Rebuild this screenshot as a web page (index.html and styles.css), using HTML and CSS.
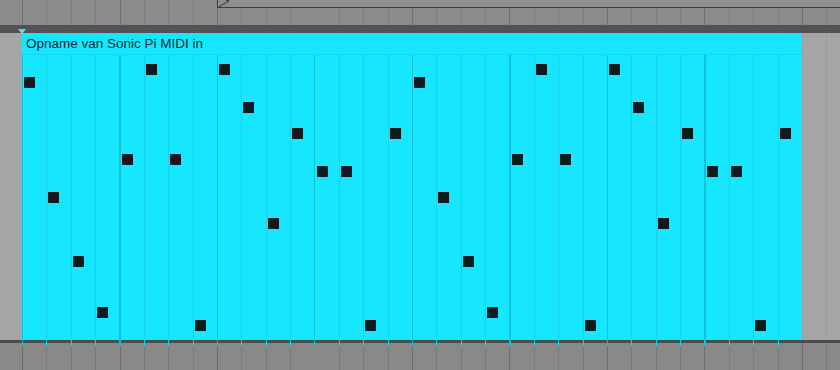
FILE: index.html
```html
<!DOCTYPE html>
<html lang="nl">
<head>
  <meta charset="UTF-8" />
  <meta name="viewport" content="width=device-width, initial-scale=1.0" />
  <title>Opname van Sonic Pi MIDI in</title>
  <link rel="stylesheet" href="styles.css">
</head>
<body>
  <div class="ruler">
    <div class="loop">
      <svg class="loop-mark" width="14" height="8" viewBox="0 0 14 8">
        <polyline points="0.5,7 11,1 8,0" fill="none" stroke="#333" stroke-width="1" />
      </svg>
    </div>
  </div>
  <div class="bar">
    <span class="start-mark"></span>
  </div>

  <div class="track">
    <div class="clip">
      <div class="clip-title">Opname van Sonic Pi MIDI in</div>
      <div class="notes" id="notes"></div>
    </div>
  </div>

  <div class="bottom-line"></div>
  <div class="bottom"></div>

  <script>
    // toonhoogte-rij per 16e noot (patroon herhaalt na 16 stappen)
    const pattern = [1, 10, 15, 19, 7, 0, 7, 20, 0, 3, 12, 5, 8, 8, 20, 5];
    const notes = document.getElementById('notes');

    for (let i = 0; i < 32; i++) {
      const note = document.createElement('div');
      note.className = 'note';
      note.style.gridColumn = (i + 1);
      note.style.gridRow = (pattern[i % 16] + 1);
      notes.appendChild(note);
    }
  </script>
</body>
</html>
```

FILE: styles.css
```css
body {
  margin: 0;
  padding: 0;
  width: 840px;
  height: 370px;
  overflow: hidden;
  background-color: #8a8a8a;
  font-family: 'Liberation Sans', Arial, sans-serif;
}
.ruler {
  height: 25px;
  background-color: #8b8b8b;
  background-image:
    repeating-linear-gradient(90deg, transparent 0 22px, #727272 22px 23px, transparent 23px 97.5px),
    repeating-linear-gradient(90deg, transparent 0 22px, #7d7d7d 22px 23px, transparent 23px 24.375px);
}
.loop {
  position: relative;
  height: 7px;
  margin-left: 217px;
  background-color: #8e8e8e;
  border-left: 1px solid #3c3c3c;
  border-bottom: 1px solid #3c3c3c;
}
.loop-mark {
  position: absolute;
  left: 0;
  top: 0;
}
.bar {
  position: relative;
  height: 8px;
  background-color: #525252;
}
.start-mark {
  position: absolute;
  left: 18px;
  top: 4px;
  width: 0;
  height: 0;
  border-left: 4px solid transparent;
  border-right: 4px solid transparent;
  border-top: 5px solid #6fd3ee;
}
.track {
  display: flex;
  height: 307px;
  padding-left: 22px;
  background-color: #a5a5a5;
  background-image:
    repeating-linear-gradient(90deg, transparent 0 22px, #9c9c9c 22px 23px, transparent 23px 24.375px);
}
.clip {
  display: flex;
  flex-direction: column;
  width: 780px;
  background-color: #17e6ff;
}
.clip-title {
  height: 21px;
  line-height: 22px;
  padding-left: 4px;
  font-size: 13.5px;
  color: #0c2c34;
  border-bottom: 1px solid #14d6ec;
  white-space: nowrap;
}
.notes {
  flex: 1;
  display: grid;
  grid-template-columns: repeat(32, 1fr);
  grid-template-rows: repeat(22, 12.8px);
  padding-top: 9px;
  box-sizing: border-box;
  background-image:
    repeating-linear-gradient(90deg, #0fc2d8 0 1px, transparent 1px 97.5px),
    repeating-linear-gradient(90deg, #14d4eb 0 1px, transparent 1px 24.375px);
}
.note {
  width: 11px;
  height: 11px;
  margin-left: 2px;
  align-self: start;
  background-color: #0f1b1f;
}
.bottom-line {
  height: 3px;
  background-color: #4c4c4c;
}
.bottom {
  height: 27px;
  background-color: #898989;
  background-image:
    repeating-linear-gradient(90deg, transparent 0 22px, #6d6d6d 22px 23px, transparent 23px 97.5px),
    repeating-linear-gradient(90deg, transparent 0 22px, #7a7a7a 22px 23px, transparent 23px 24.375px);
}
```
